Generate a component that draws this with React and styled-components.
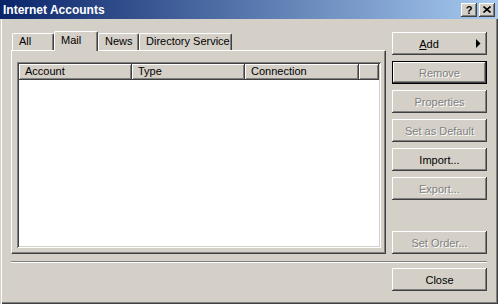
import React from 'react'
import styled, { createGlobalStyle } from 'styled-components'

const GlobalStyle = createGlobalStyle`
  html, body {
    margin: 0;
    padding: 0;
    background: #d4d0c8;
  }
  body {
    font-family: "Liberation Sans", Arial, sans-serif;
    font-size: 11px;
    color: #000;
  }
  * {
    box-sizing: border-box;
  }
`

const Window = styled.div`
  width: 498px;
  height: 304px;
  display: flex;
  flex-direction: column;
  background: #d4d0c8;
  overflow: hidden;
`

const TitleBar = styled.div`
  height: 19px;
  flex: none;
  display: flex;
  align-items: center;
  padding: 0 3px 0 3px;
  background: linear-gradient(to right, #0a246a, #a6caf0);
  color: #fff;
  font-weight: bold;
  font-size: 12px;
`

const Title = styled.span`
  flex: 1;
`

const CaptionButton = styled.div`
  width: 16px;
  height: 14px;
  margin-left: ${p => p.$gap || 0}px;
  display: flex;
  align-items: center;
  justify-content: center;
  background: #d4d0c8;
  color: #000;
  font-size: 11px;
  font-weight: bold;
  box-shadow: inset -1px -1px #404040, inset 1px 1px #fff, inset -2px -2px #808080;
`

const Body = styled.div`
  flex: 1;
  display: flex;
  flex-direction: column;
  padding: 12px 11px 0 11px;
  box-shadow: inset 1px 0 #d4d0c8, inset 2px 0 #fff, inset -1px -1px #404040, inset -2px -2px #808080;
`

const MainRow = styled.div`
  display: flex;
  height: 223px;
`

const TabArea = styled.div`
  width: 375px;
  display: flex;
  flex-direction: column;
`

const TabStrip = styled.div`
  height: 19px;
  display: flex;
  align-items: flex-end;
  padding-left: 1px;
`

const Tab = styled.div`
  width: ${p => p.$w}px;
  height: ${p => (p.$active ? 20 : 17)}px;
  margin-bottom: ${p => (p.$active ? -1 : 0)}px;
  padding: ${p => (p.$active ? '2px 0 0 6px' : '1px 0 0 6px')};
  position: relative;
  z-index: ${p => (p.$active ? 1 : 0)};
  background: #d4d0c8;
  border-top: 1px solid #fff;
  border-left: 1px solid #fff;
  border-right: 1px solid #404040;
  border-radius: 2px 2px 0 0;
  box-shadow: inset -1px 0 #808080;
  white-space: nowrap;
`

const Panel = styled.div`
  flex: 1;
  padding: 11px 0 0 5px;
  border-top: 1px solid #fff;
  border-left: 1px solid #fff;
  border-right: 1px solid #404040;
  border-bottom: 1px solid #404040;
  box-shadow: inset -1px -1px #808080;
`

const ListView = styled.div`
  width: 364px;
  height: 186px;
  padding: 2px;
  background: #fff;
  box-shadow: inset 1px 1px #808080, inset -1px -1px #fff, inset 2px 2px #404040, inset -2px -2px #d4d0c8;
`

const Header = styled.div`
  display: flex;
  height: 16px;
`

const HeaderCell = styled.div`
  width: ${p => (p.$w ? `${p.$w}px` : 'auto')};
  flex: ${p => (p.$w ? 'none' : 1)};
  padding: 1px 0 0 6px;
  line-height: 13px;
  background: #d4d0c8;
  box-shadow: inset -1px -1px #404040, inset 1px 1px #fff, inset -2px -2px #808080;
`

const ButtonColumn = styled.div`
  margin-left: 6px;
  width: 95px;
  display: flex;
  flex-direction: column;
  gap: 6px;
  padding-top: 1px;
`

const Button = styled.div`
  width: 95px;
  height: 23px;
  flex: none;
  display: flex;
  align-items: center;
  justify-content: center;
  margin-top: ${p => (p.$push ? 'auto' : '0')};
  background: #d4d0c8;
  color: ${p => (p.$disabled ? '#808080' : '#000')};
  text-shadow: ${p => (p.$disabled ? '1px 1px #fff' : 'none')};
  box-shadow: ${p =>
    p.$default
      ? 'inset 0 0 0 1px #000, inset -2px -2px #404040, inset 2px 2px #fff, inset -3px -3px #808080'
      : 'inset -1px -1px #404040, inset 1px 1px #fff, inset -2px -2px #808080, inset 2px 2px #d4d0c8'};
`

const MenuButton = styled(Button)`
  padding-right: 6px;
`

const MenuLabel = styled.span`
  flex: 1;
  text-align: center;
`

const Arrow = styled.svg`
  margin-left: 10px;
  flex: none;
`

const Separator = styled.div`
  margin-top: 7px;
  height: 2px;
  border-top: 1px solid #808080;
  border-bottom: 1px solid #fff;
`

const Footer = styled.div`
  margin-top: 5px;
  display: flex;
  justify-content: flex-end;
`

const tabs = [
  { label: 'All', w: 42 },
  { label: 'Mail', w: 44, active: true },
  { label: 'News', w: 41 },
  { label: 'Directory Service', w: 93 },
]

const columns = [
  { label: 'Account', w: 113 },
  { label: 'Type', w: 113 },
  { label: 'Connection', w: 114 },
  { label: '' },
]

export default function App() {
  return (
    <Window>
      <GlobalStyle />
      <TitleBar>
        <Title>Internet Accounts</Title>
        <CaptionButton>?</CaptionButton>
        <CaptionButton $gap={2}>
          <svg width="8" height="7" viewBox="0 0 8 7">
            <path d="M0.5 0.5 L7.5 6.5 M7.5 0.5 L0.5 6.5" stroke="#000" strokeWidth="1.6" />
          </svg>
        </CaptionButton>
      </TitleBar>
      <Body>
        <MainRow>
          <TabArea>
            <TabStrip>
              {tabs.map(t => (
                <Tab key={t.label} $w={t.w} $active={t.active}>
                  {t.label}
                </Tab>
              ))}
            </TabStrip>
            <Panel>
              <ListView>
                <Header>
                  {columns.map((c, i) => (
                    <HeaderCell key={i} $w={c.w}>
                      {c.label}
                    </HeaderCell>
                  ))}
                </Header>
              </ListView>
            </Panel>
          </TabArea>
          <ButtonColumn>
            <MenuButton>
              <MenuLabel>
                <u>A</u>dd
              </MenuLabel>
              <Arrow width="5" height="9" viewBox="0 0 5 9">
                <path d="M0 0 L4.5 4.5 L0 9 Z" fill="#000" />
              </Arrow>
            </MenuButton>
            <Button $disabled $default>Remove</Button>
            <Button $disabled>Properties</Button>
            <Button $disabled>Set as Default</Button>
            <Button>Import...</Button>
            <Button $disabled>Export...</Button>
            <Button $disabled $push>Set Order...</Button>
          </ButtonColumn>
        </MainRow>
        <Separator />
        <Footer>
          <Button>Close</Button>
        </Footer>
      </Body>
    </Window>
  )
}
